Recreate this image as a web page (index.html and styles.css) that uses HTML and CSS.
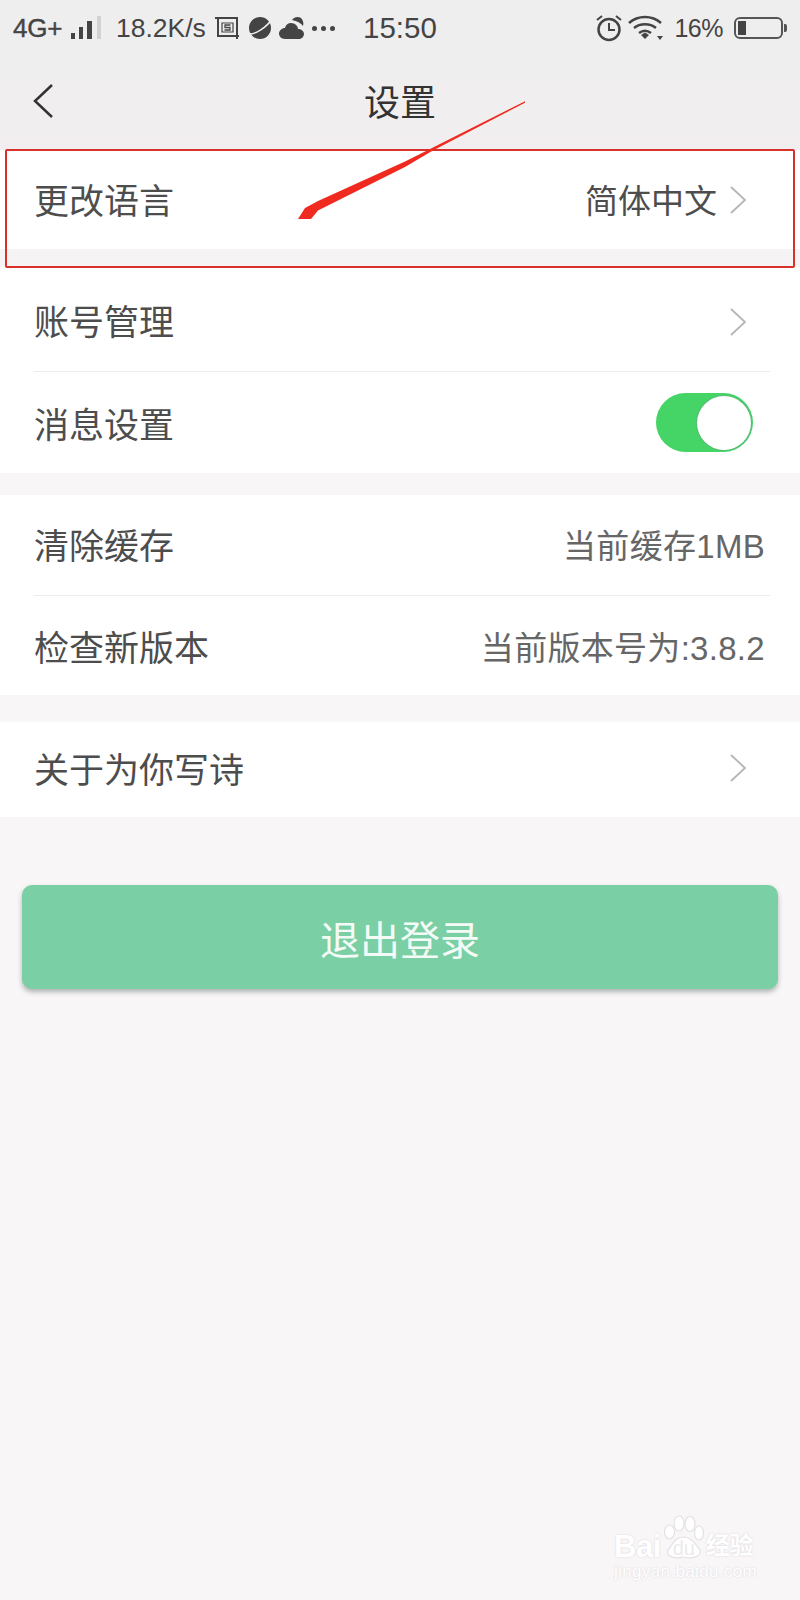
FILE: index.html
```html
<!DOCTYPE html>
<html lang="zh-CN">
<head>
<meta charset="utf-8">
<title>设置</title>
<link rel="stylesheet" href="styles.css">
</head>
<body>
<div class="page">
  <header class="top">
    <div class="status">
      <div class="status-left">
        <span class="net">4G+</span>
        <svg class="signal" width="32" height="24" viewBox="0 0 32 24"><rect x="1" y="17" width="4" height="6" fill="#444"/><rect x="9" y="11" width="4" height="12" fill="#444"/><rect x="17" y="5" width="5" height="18" fill="#444"/><rect x="27" y="0" width="4" height="23" fill="#d2d2d2"/></svg>
        <span class="speed">18.2K/s</span>
        <svg class="ic-s" width="24" height="24" viewBox="0 0 24 24"><path d="M0 2H22V23M3 1V20H24" fill="none" stroke="#444" stroke-width="2"/><path d="M7 7H18V16H7Z" fill="none" stroke="#444" stroke-width="1.200"/><path d="M15.500 9H10V11.500H15V14H9.500" fill="none" stroke="#444" stroke-width="1.300"/></svg>
        <svg class="ic-planet" width="26" height="24" viewBox="0 0 26 24"><circle cx="13" cy="12" r="11" fill="#444"/><path d="M1 18C8 19 20 11 25 3" fill="none" stroke="#eee" stroke-width="1.500"/></svg>
        <svg class="ic-cloud" width="26" height="24" viewBox="0 0 26 24"><path d="M6 23C2 23 0 20 0 17.500C0 14.500 3 12 6 12C7 8 10 7 12 7C16 7 19 10 19 13C22 13 25 15 25 18C25 21 22 23 20 23Z" fill="#444"/><path d="M13 4C15 1 19 0 22 2C24 4 25 7 24 10C22 7 18 5 13 4Z" fill="#444"/></svg>
        <span class="dots"><i></i><i></i><i></i></span>
      </div>
      <span class="clock">15:50</span>
      <div class="status-right">
        <svg class="ic-alarm" width="28" height="28" viewBox="0 0 28 28"><circle cx="14" cy="15.500" r="10.500" fill="none" stroke="#444" stroke-width="2.500"/><path d="M14 9V16H20" fill="none" stroke="#444" stroke-width="2"/><path d="M2 6L7 2M21 2L26 6" fill="none" stroke="#444" stroke-width="2"/></svg>
        <svg class="wifi" width="36" height="26" viewBox="0 0 36 26"><path d="M1 8C10 0 24 0 33 8M6 13C12 8 22 8 28 13M11 18C15 15 19 15 23 18" fill="none" stroke="#444" stroke-width="2.500"/><path d="M13 20L17 17.500L21 20L17 24Z" fill="#444"/><path d="M29 21H35L32 25Z" fill="#444"/></svg>
        <span class="pct">16%</span>
        <span class="battery"><span class="battery-fill"></span></span>
      </div>
    </div>
    <nav class="nav">
      <svg class="back" width="24" height="36" viewBox="0 0 24 36"><path d="M20 2L3 18L20 34" fill="none" stroke="#333" stroke-width="2.500"/></svg>
      <h1 class="title">设置</h1>
    </nav>
  </header>

  <section class="group group-first">
    <div class="row row-lang">
      <span class="label">更改语言</span>
      <span class="value value-dark">简体中文</span>
      <svg class="chev chev-low1" width="18" height="30" viewBox="0 0 18 30"><path d="M2 2L16 15L2 28" fill="none" stroke="#b5b5b5" stroke-width="1.800"/></svg>
    </div>
  </section>
  <div class="gap-lang"></div>

  <section class="group">
    <div class="row row-account">
      <span class="label">账号管理</span>
      <svg class="chev chev-low2" width="18" height="30" viewBox="0 0 18 30"><path d="M2 2L16 15L2 28" fill="none" stroke="#b5b5b5" stroke-width="1.800"/></svg>
    </div>
    <div class="row row-msg">
      <span class="label">消息设置</span>
      <span class="switch"><span class="knob"></span></span>
    </div>
  </section>

  <section class="group group-wide">
    <div class="row row-cache">
      <span class="label">清除缓存</span>
      <span class="value">当前缓存1MB</span>
    </div>
    <div class="row row-version">
      <span class="label">检查新版本</span>
      <span class="value">当前版本号为:3.8.2</span>
    </div>
  </section>

  <section class="group">
    <div class="row row-about">
      <span class="label">关于为你写诗</span>
      <svg class="chev" width="18" height="30" viewBox="0 0 18 30"><path d="M2 2L16 15L2 28" fill="none" stroke="#b5b5b5" stroke-width="1.800"/></svg>
    </div>
  </section>

  <button class="logout">退出登录</button>

  <div class="callout"></div>
  <svg class="arrow" width="240" height="130" viewBox="0 0 240 130"><path d="M228 0.300L135 47L108 60.500L21 100L8 107L1 118L14 118L21 109.500L108 66L135 50L228 1.800Z" fill="#f02a1e"/></svg>

  <div class="mark">
    <div class="mark-row">
      <span class="mark-bai">Bai</span>
      <span class="mark-du">
        <svg class="paw" width="40" height="45" viewBox="0 0 40 45"><g fill="#fff" stroke="#e4e1e4" stroke-width="1.200"><ellipse cx="5.500" cy="17" rx="5" ry="7"/><ellipse cx="15" cy="8.500" rx="5" ry="7.500"/><ellipse cx="26" cy="9" rx="5" ry="7.500"/><ellipse cx="35" cy="18" rx="4.500" ry="7"/><path d="M19 22C10 22 8 32 4 35C1 42 12 44 19 42C28 44 38 42 36 35C32 30 28 22 19 22Z"/></g></svg>
        <span class="du-text">du</span>
      </span>
      <span class="mark-cn">经验</span>
    </div>
    <div class="mark-url">jingyan.baidu.com</div>
  </div>
</div>
</body>
</html>
```

FILE: styles.css
```css
* { box-sizing: border-box; }

html, body {
  margin: 0;
  padding: 0;
}

body {
  width: 800px;
  height: 1600px;
  overflow: hidden;
  background: #f9f6f8;
  font-family: "Liberation Sans", "Noto Sans CJK SC", sans-serif;
  color: #444;
}

.page {
  position: relative;
  width: 800px;
  height: 1600px;
}

.top {
  height: 150px;
  background: linear-gradient(#eeeeee 0, #efeeee 60px, #f2eef0 100%);
}

.status {
  position: relative;
  display: flex;
  justify-content: space-between;
  align-items: center;
  height: 56px;
  padding: 0 17px 0 13px;
  color: #444;
}

.status-left, .status-right {
  display: flex;
  align-items: center;
}

.net {
  width: 49px;
  font-size: 26px;
  letter-spacing: -0.200px;
  -webkit-text-stroke: 0.400px #444;
}

.signal { margin-left: 8px; }

.speed {
  margin-left: 14px;
  font-size: 26.500px;
}

.ic-s { margin-left: 9px; }
.ic-planet { margin-left: 8px; }
.ic-cloud { margin-left: 6px; }

.dots {
  display: flex;
  gap: 4px;
  margin-left: 7px;
}

.dots i {
  display: block;
  width: 5px;
  height: 5px;
  border-radius: 50%;
  background: #444;
}

.clock {
  position: absolute;
  left: 363px;
  font-size: 29.500px;
}

.ic-alarm { margin-right: 5px; }
.wifi { margin-right: 10px; }

.pct {
  font-size: 25px;
  letter-spacing: -0.500px;
  margin-right: 11px;
}

.battery {
  position: relative;
  display: block;
  width: 49px;
  height: 22px;
  padding: 2px;
  border: 2px solid #555;
  border-radius: 6px;
}

.battery::after {
  content: "";
  position: absolute;
  right: -6px;
  top: 5px;
  width: 3px;
  height: 8px;
  background: #555;
  border-radius: 0 2px 2px 0;
}

.battery-fill {
  display: block;
  width: 8px;
  height: 100%;
  background: #444;
}

.nav {
  position: relative;
  display: flex;
  justify-content: center;
  align-items: center;
  height: 94px;
  padding-top: 2px;
}

.back {
  position: absolute;
  left: 32px;
  top: 27px;
}

.title {
  margin: 0;
  font-size: 36px;
  font-weight: 400;
  line-height: 92px;
  color: #333;
}

.group {
  margin-bottom: 22px;
  background: #fff;
}

.group-first { margin-bottom: 0; }
.group-wide { margin-bottom: 27px; }

.gap-lang {
  height: 18px;
  background: #f6f3f4;
}

.row {
  display: flex;
  align-items: center;
  margin: 0 30px 0 34px;
  padding-right: 5px;
}

.row-lang {
  height: 99px;
  padding-bottom: 2px;
}

.row-account {
  height: 105px;
  padding-top: 2px;
  border-bottom: 1px solid #ececec;
}

.row-msg { height: 101px; }

.row-cache {
  height: 101px;
  padding-bottom: 2px;
  border-bottom: 1px solid #ececec;
}

.row-version { height: 99px; }

.row-about {
  height: 95px;
  padding-bottom: 3px;
}

.label {
  flex: 1;
  padding-top: 5px;
  font-size: 35px;
  color: #4d4d4d;
  line-height: 1;
}

.value {
  padding-top: 5px;
  font-size: 33px;
  letter-spacing: 0.300px;
  color: #666;
  line-height: 1;
}

.value-dark {
  color: #4d4d4d;
  letter-spacing: 0;
  margin-right: 12px;
}

.chev {
  display: block;
  margin-right: 18px;
}

.chev-low1 { margin-top: 2px; }
.chev-low2 { margin-top: 4px; }

.switch {
  display: block;
  position: relative;
  width: 97px;
  height: 59px;
  margin-right: 12px;
  border-radius: 30px;
  background: #44d566;
}

.knob {
  position: absolute;
  right: 2px;
  top: 3px;
  width: 54px;
  height: 54px;
  border-radius: 50%;
  background: #fff;
  box-shadow: 0 0 0 1px #5ab97a;
}

.logout {
  display: block;
  width: 756px;
  height: 104px;
  margin: 68px 0 0 22px;
  padding: 2px 0 0;
  border: 0;
  border-radius: 10px;
  background: #7bcfa4;
  box-shadow: 0 3px 5px rgba(80, 100, 90, 0.450);
  color: #f4fbf7;
  font-family: inherit;
  font-size: 40px;
}

.callout {
  position: absolute;
  left: 5px;
  top: 149px;
  width: 790px;
  height: 119px;
  border: 2px solid #d9302a;
  border-radius: 2px;
}

.arrow {
  position: absolute;
  left: 297px;
  top: 101px;
}

.mark {
  position: absolute;
  left: 614px;
  top: 1515px;
  color: #fff;
  text-shadow: 0 0 2px #d4d0d4;
}

.mark-row {
  display: flex;
  align-items: flex-end;
  height: 45px;
}

.mark-bai {
  font-size: 31px;
  font-weight: 700;
  line-height: 36px;
  letter-spacing: -0.500px;
  margin-bottom: -5px;
}

.mark-du {
  position: relative;
  display: block;
  width: 40px;
  height: 45px;
  margin-left: 3px;
}

.paw {
  display: block;
}

.du-text {
  position: absolute;
  left: 9px;
  top: 22px;
  font-size: 20px;
  line-height: 22px;
  color: #eceaec;
  text-shadow: none;
}

.mark-cn {
  margin-left: 2px;
  margin-bottom: -2px;
  font-size: 24px;
  line-height: 32px;
  font-weight: 700;
}

.mark-url {
  margin-top: 2px;
  font-size: 17px;
  line-height: 20px;
  letter-spacing: 0.350px;
}
```
